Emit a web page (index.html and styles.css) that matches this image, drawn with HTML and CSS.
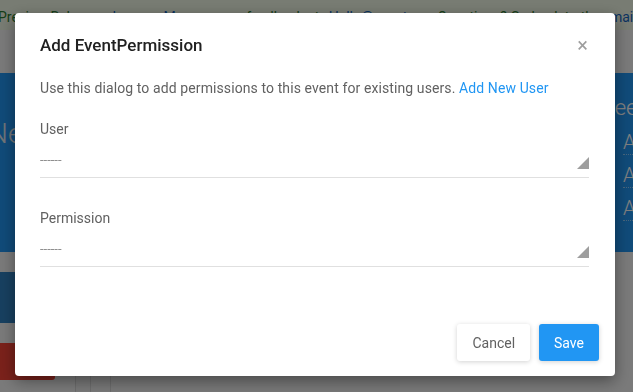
FILE: index.html
```html
<!DOCTYPE html>
<html lang="en">
<head>
    <meta charset="UTF-8">
    <meta name="viewport" content="width=device-width, initial-scale=1.0">
    <title>Add EventPermission</title>
    <link rel="stylesheet" href="styles.css">
</head>
<body>
    <div class="notice">
        <span class="notice-tag">Preview Release:</span>
        <a href="#">Leave a Message</a> or feedback at
        <a href="#">Hello@eventyay</a> Questions? Go back to the
        <a href="#">main version</a>
    </div>

    <div class="page">
        <div class="main-col">
            <div class="hero-card">
                <h2>New Event</h2>
            </div>
            <div class="tab-bar"></div>
            <div class="danger-btn"></div>
            <div class="table-stub">
                <span></span><span></span><span></span>
            </div>
        </div>
        <div class="side-col">
            <div class="side-card">
                <h3>Need help?</h3>
                <ul>
                    <li>About</li>
                    <li>Attendees</li>
                    <li>Access</li>
                </ul>
            </div>
        </div>
    </div>

    <div class="backdrop"></div>

    <div class="modal">
        <div class="modal-header">
            <h4>Add EventPermission</h4>
            <span class="close">&times;</span>
        </div>
        <div class="modal-body">
            <p class="intro">Use this dialog to add permissions to this event for existing users. <a href="#">Add New User</a></p>

            <div class="form-group">
                <label>User</label>
                <div class="select">
                    <span>------</span>
                    <svg class="caret" width="12" height="12" viewBox="0 0 12 12"><polygon points="12,0 12,12 0,12" fill="#9e9e9e"/></svg>
                </div>
            </div>

            <div class="form-group">
                <label>Permission</label>
                <div class="select">
                    <span>------</span>
                    <svg class="caret" width="12" height="12" viewBox="0 0 12 12"><polygon points="12,0 12,12 0,12" fill="#9e9e9e"/></svg>
                </div>
            </div>
        </div>
        <div class="modal-footer">
            <button class="btn">Cancel</button>
            <button class="btn btn-primary">Save</button>
        </div>
    </div>
</body>
</html>
```

FILE: styles.css
```css
body {
    margin: 0;
    font-family: Roboto, "Noto Sans", sans-serif;
    background-color: #f5f5f5;
    width: 633px;
    height: 392px;
    overflow: hidden;
}
.notice {
    height: 30px;
    background-color: #f1f9e6;
    color: #2e7d32;
    font-size: 14px;
    line-height: 34px;
    white-space: nowrap;
    overflow: hidden;
    margin-left: -2px;
}
.notice a {
    color: #1565c0;
    text-decoration: none;
    margin: 0 6px;
}
.page {
    display: grid;
    grid-template-columns: 400px 1fr;
    column-gap: 215px;
    padding-top: 43px;
}
.main-col {
    display: flex;
    flex-direction: column;
}
.hero-card {
    height: 179px;
    background-color: #2196f3;
    overflow: hidden;
}
.hero-card h2 {
    margin: 44px 0 0 -12px;
    font-size: 28px;
    font-weight: 300;
    color: #e3e8ee;
    white-space: nowrap;
}
.tab-bar {
    margin-top: 20px;
    height: 51px;
    background-color: #3081c0;
}
.danger-btn {
    margin-top: 20px;
    width: 55px;
    height: 37px;
    background-color: #f44336;
    border-radius: 0 0 3px 0;
}
.table-stub {
    display: flex;
    margin: -4px 0 0 75px;
    height: 40px;
    background-color: #f0f0f0;
}
.table-stub span {
    border-left: 1px solid #d8d8d8;
    width: 14px;
}
.table-stub span:nth-child(2) {
    width: 19px;
}
.side-col {
    display: flex;
    flex-direction: column;
}
.side-card {
    height: 179px;
    background-color: #2196f3;
    color: #fff;
    margin-left: -4px;
    overflow: hidden;
}
.side-card h3 {
    margin: 22px 0 0 -12px;
    font-size: 22px;
    font-weight: 300;
    white-space: nowrap;
}
.side-card ul {
    list-style: none;
    margin: 10px 0 0;
    padding: 0 0 0 12px;
}
.side-card li {
    font-size: 20px;
    font-weight: 300;
    line-height: 24px;
    margin-bottom: 8px;
    border-bottom: 1px dotted rgba(255, 255, 255, 0.5);
    width: 60px;
    white-space: nowrap;
    overflow: hidden;
}
.backdrop {
    position: fixed;
    inset: 0;
    background-color: rgba(0, 0, 0, 0.5);
}
.modal {
    position: fixed;
    left: 15px;
    top: 13px;
    width: 600px;
    height: 363px;
    background-color: #fff;
    border-radius: 4px;
    box-shadow: 0 5px 15px rgba(0, 0, 0, 0.4);
    display: flex;
    flex-direction: column;
}
.modal-header {
    display: flex;
    justify-content: space-between;
    align-items: center;
    padding: 20px 25px 0;
}
.modal-header h4 {
    margin: 0;
    font-size: 17px;
    font-weight: 500;
    line-height: 24px;
    color: #212121;
}
.close {
    color: #9e9e9e;
    font-size: 20px;
    line-height: 24px;
    margin-right: 2px;
}
.modal-body {
    padding: 21px 26px 0 25px;
    flex: 1;
}
.intro {
    margin: 0 0 20px;
    font-size: 14px;
    line-height: 20px;
    letter-spacing: 0.1px;
    color: #616161;
}
.intro a {
    color: #2196f3;
    text-decoration: none;
}
.form-group {
    margin-bottom: 29px;
}
.form-group label {
    display: block;
    padding-top: 1px;
    font-size: 14px;
    line-height: 21px;
    color: #616161;
}
.select {
    height: 38px;
    box-sizing: border-box;
    border-bottom: 1px solid #e0e0e0;
    display: flex;
    justify-content: space-between;
    align-items: center;
    font-size: 13px;
    color: #8a8a8a;
}
.select span {
    padding-top: 2px;
}
.caret {
    margin-top: 8px;
}
.modal-footer {
    display: flex;
    justify-content: flex-end;
    gap: 9px;
    padding: 0 16px 15px;
}
.btn {
    height: 37px;
    padding: 0 15px;
    border: none;
    border-radius: 3px;
    background-color: #fff;
    color: #616161;
    font-family: Roboto, sans-serif;
    font-size: 14px;
    box-shadow: 0 1px 5px rgba(0, 0, 0, 0.18);
}
.btn-primary {
    background-color: #2196f3;
    color: #fff;
}
```
